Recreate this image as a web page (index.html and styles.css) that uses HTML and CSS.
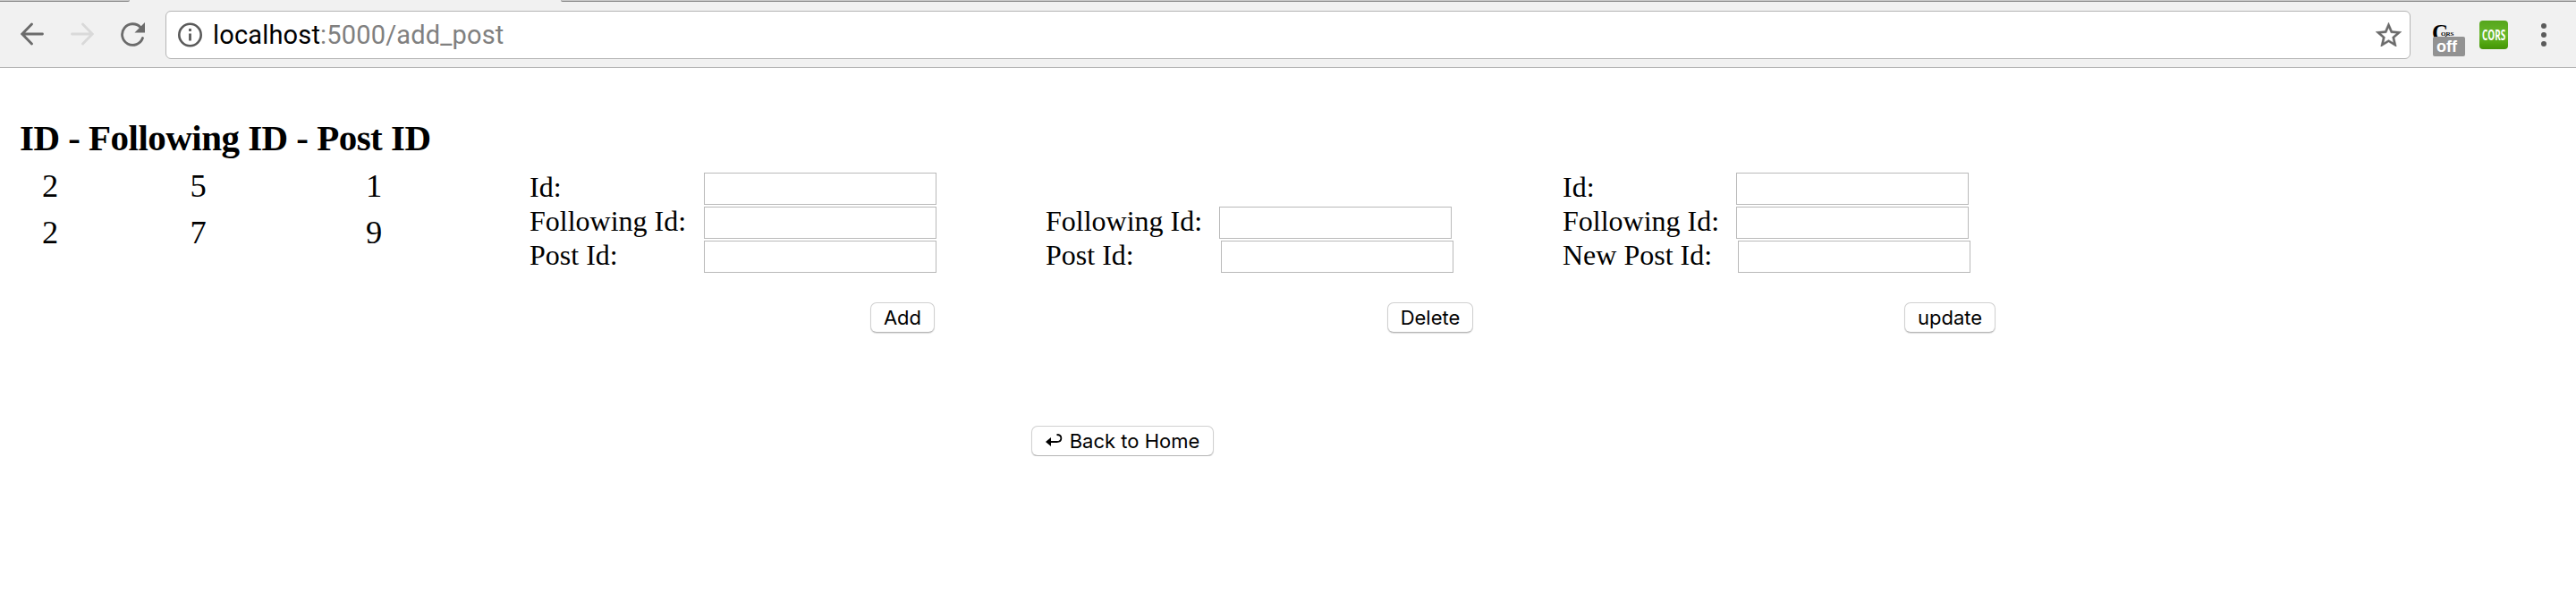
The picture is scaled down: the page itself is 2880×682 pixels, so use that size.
FILE: index.html
```html
<!DOCTYPE html>
<html lang="en">
<head>
<meta charset="utf-8">
<title>Add post</title>
<link rel="stylesheet" href="styles.css">
</head>
<body>
<header class="browser">
  <div class="tabs"><span class="tab tab-left"></span><span class="tab tab-right"></span></div>
  <div class="toolbar">
    <svg class="nav" width="26" height="28" viewBox="0 0 26 28"><path d="M24.500 13H2M12.500 2L1.800 13l10.700 11" fill="none" stroke="#6b6b6b" stroke-width="2.800" stroke-linecap="round"/></svg>
    <svg class="nav" width="26" height="28" viewBox="0 0 26 28"><path d="M1.500 13H24M13.500 2l10.700 11-10.700 11" fill="none" stroke="#d9d9d9" stroke-width="2.800" stroke-linecap="round"/></svg>
    <svg class="reload" width="28" height="28" viewBox="0 0 28 28"><path d="M22 5.500A11.800 11.800 0 1 0 24.500 17.500" fill="none" stroke="#6b6b6b" stroke-width="2.800" stroke-linecap="round"/><path d="M27 0v11.500H15.500z" fill="#6b6b6b"/></svg>
    <div class="address">
      <svg class="info" width="28" height="28" viewBox="0 0 28 28"><circle cx="13.500" cy="14" r="12.200" fill="none" stroke="#5a5a5a" stroke-width="2.600"/><path d="M13.500 7v3M13.500 12.500v8" stroke="#5a5a5a" stroke-width="2.800"/></svg>
      <span class="url"><span class="host">localhost</span>:5000/add_post</span>
      <svg class="star" width="29" height="27.500" viewBox="2 2 20 19"><path d="M22 9.240l-7.190-.620L12 2 9.190 8.630 2 9.240l5.460 4.730L5.820 21 12 17.270 18.180 21l-1.630-7.030L22 9.240zM12 15.400l-3.760 2.270 1-4.280-3.320-2.880 4.380-.380L12 6.100l1.710 4.040 4.380.380-3.320 2.880 1 4.280L12 15.400z" fill="#6b6b6b" stroke="#6b6b6b" stroke-width=".25"/></svg>
    </div>
    <div class="cors-off"><span class="big">C</span><span class="small">ORS</span><span class="badge">off</span></div>
    <div class="cors"><span>CORS</span></div>
    <svg class="menu" width="6" height="26" viewBox="0 0 6 26"><circle cx="3" cy="3" r="3"/><circle cx="3" cy="13" r="3"/><circle cx="3" cy="23" r="3"/></svg>
  </div>
</header>
<main class="page">
  <section class="posts">
    <h1><span>ID - Following ID - Post ID</span></h1>
    <div class="row"><span>2</span><span>5</span><span>1</span></div>
    <div class="row"><span>2</span><span>7</span><span>9</span></div>
  </section>
  <form class="form add-form">
    <label><span>Id:</span><input type="text"></label>
    <label><span>Following Id:</span><input type="text"></label>
    <label><span>Post Id:</span><input type="text"></label>
    <button class="add" type="button"><span>Add</span></button>
  </form>
  <form class="form delete-form">
    <label><span>Following Id:</span><input type="text"></label>
    <label class="shifted"><span>Post Id:</span><input type="text"></label>
    <button class="delete" type="button"><span>Delete</span></button>
  </form>
  <form class="form update-form">
    <label><span>Id:</span><input type="text"></label>
    <label><span>Following Id:</span><input type="text"></label>
    <label class="shifted"><span>New Post Id:</span><input type="text"></label>
    <button class="update" type="button"><span>update</span></button>
  </form>
</main>
<button class="home" type="button"><svg width="19" height="16" viewBox="0 0 19 16"><path d="M12.500 1c6.500 0 6.500 8 0 8H4" fill="none" stroke="#000" stroke-width="1.800"/><path d="M0 9l6-5v10z"/></svg><span>Back to Home</span></button>
</body>
</html>
```
FILE: styles.css
```css
* { box-sizing: border-box; }
body { margin: 0; background: #fff; color: #000; font-family: "Liberation Serif", "Times New Roman", serif; }
svg { display: block; flex: none; }
.browser { height: 76px; background: #f1f1f1; border-bottom: 1px solid #b3b3b3; }
.tabs { display: flex; justify-content: space-between; height: 2px; }
.tab { height: 2px; background: #cbcbcb; border-bottom: 1px solid #858585; }
.tab-left { width: 145px; border-bottom-right-radius: 2px; }
.tab-right { width: 2253px; border-bottom-left-radius: 2px; }
.toolbar { display: flex; align-items: center; height: 73px; padding: 0 33px 0 23px; }
.nav { margin-right: 30px; }
.reload { margin-right: 22px; }
.address { display: flex; align-items: center; flex: none; width: 2510px; height: 54px; padding: 0 9px 0 13px; background: #fff; border: 1px solid #b5b5b5; border-radius: 6px; }
.url { margin-left: 11px; font: 29px/52px Roboto, sans-serif; letter-spacing: .17px; color: #808080; white-space: nowrap; }
.host { color: #000; }
.star { margin-left: auto; }
.cors-off { position: relative; display: flex; flex: none; width: 37px; height: 48px; margin: 0 16px 0 24px; padding-top: 10px; white-space: nowrap; line-height: 24px; }
.big { width: 10px; font-size: 25px; font-weight: bold; }
.small { margin-top: 8px; font-size: 7px; line-height: 10px; font-weight: bold; }
.badge { position: absolute; left: 1px; top: 26px; width: 36px; height: 22px; border-radius: 2px; background: #929292; color: #fff; font: bold 18px/22px "Liberation Sans", sans-serif; padding-left: 4px; }
.cors { display: flex; align-items: center; justify-content: center; flex: none; width: 32px; height: 32px; border-radius: 4px; background: linear-gradient(#55a51c, #69b82a 50%, #4ca00c 85%, #45930a); color: #fff; font: bold 16px/30px "Open Sans", sans-serif; }
.cors span { transform: scaleX(.62); }
.menu { margin-left: auto; fill: #5b5b5b; }
.page { display: flex; height: 400px; }
.posts { width: 592px; padding-top: 53px; }
h1 { margin: 0 0 3px 22px; font-size: 41px; line-height: 50px; letter-spacing: -.53px; white-space: nowrap; }
.row { display: grid; grid-template-columns: 112px 219px 174px; height: 52px; font-size: 36.5px; line-height: 52px; text-align: center; }
.form { width: 578px; padding-top: 115px; }
.add-form { width: 577px; }
.add-form label span { width: 195px; }
.delete-form { padding-top: 153px; }
label { display: flex; height: 38px; font-size: 32px; line-height: 36px; white-space: nowrap; }
label span { width: 194px; flex: none; }
input { width: 260px; height: 36px; margin: 2px 0 0; padding: 0; border: 1px solid #b9b9b9; border-radius: 0; background: #fff; }
.shifted input { margin-left: 2px; }
button { display: flex; align-items: center; justify-content: center; height: 34px; padding: 0; background: #fff; border: 1px solid #d0d0d0; border-bottom-color: #b5b5b5; border-radius: 7px; box-shadow: 0 1px 1px #ddd; font: 22px/32px Inter, sans-serif; color: #000; white-space: nowrap; }
.form button { margin-top: 33px; }
.add { width: 72px; margin-left: 381px; }
.delete { width: 96px; margin-left: 382px; }
.update { width: 102px; margin-left: 382px; }
.home { width: 204px; margin-left: 1153px; gap: 8px; }
```
